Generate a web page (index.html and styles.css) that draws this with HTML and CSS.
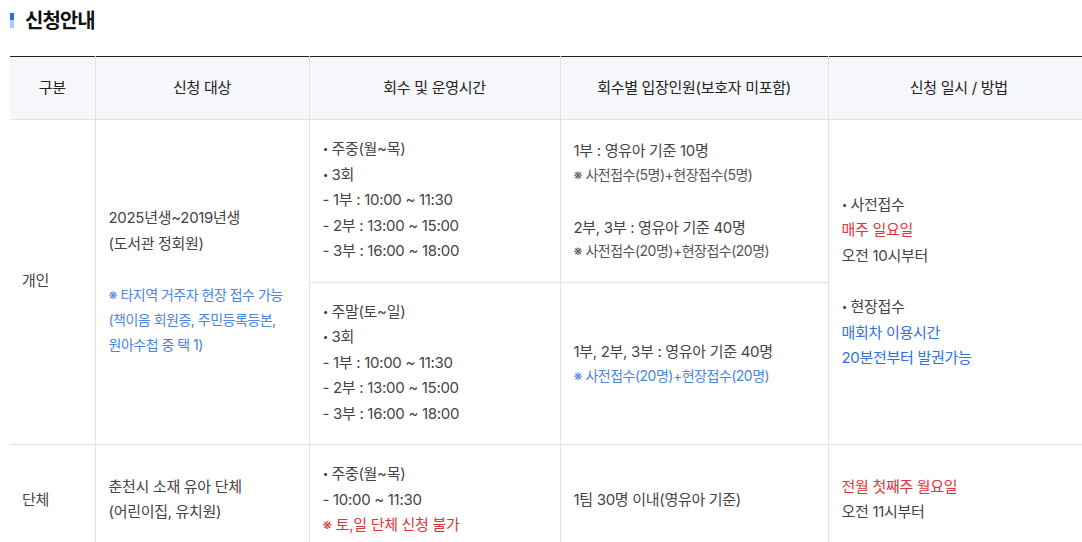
FILE: index.html
```html
<!DOCTYPE html>
<html lang="ko">
<head>
<meta charset="utf-8">
<title>신청안내</title>
<link rel="stylesheet" href="styles.css">
</head>
<body>
<div class="page">
  <h2 class="title"><span class="marker"></span>신청안내</h2>
  <table class="info">
    <colgroup>
      <col class="c1"><col class="c2"><col class="c3"><col class="c4"><col class="c5">
    </colgroup>
    <thead>
      <tr>
        <th>구분</th>
        <th>신청 대상</th>
        <th>회수 및 운영시간</th>
        <th>회수별 입장인원(보호자 미포함)</th>
        <th>신청 일시 / 방법</th>
      </tr>
    </thead>
    <tbody>
      <tr>
        <td class="first" rowspan="2">개인</td>
        <td rowspan="2">
          <p>2025년생~2019년생<br>(도서관 정회원)</p>
          <p class="note blue gap">※ 타지역 거주자 현장 접수 가능<br>(책이음 회원증, 주민등록등본,<br>원아수첩 중 택 1)</p>
        </td>
        <td>
          <p><span class="dot">•</span> 주중(월~목)<br><span class="dot">•</span> 3회<br>- 1부 : 10:00 ~ 11:30<br>- 2부 : 13:00 ~ 15:00<br>- 3부 : 16:00 ~ 18:00</p>
        </td>
        <td>
          <p>1부 : 영유아 기준 10명</p>
          <p class="small">※ 사전접수(5명)+현장접수(5명)</p>
          <p class="group">2부, 3부 : 영유아 기준 40명</p>
          <p class="small">※ 사전접수(20명)+현장접수(20명)</p>
        </td>
        <td rowspan="2">
          <p><span class="dot">•</span> 사전접수<br><span class="red">매주 일요일</span><br>오전 10시부터</p>
          <p class="gap"><span class="dot">•</span> 현장접수<br><span class="blue2">매회차 이용시간<br>20분전부터 발권가능</span></p>
        </td>
      </tr>
      <tr>
        <td>
          <p><span class="dot">•</span> 주말(토~일)<br><span class="dot">•</span> 3회<br>- 1부 : 10:00 ~ 11:30<br>- 2부 : 13:00 ~ 15:00<br>- 3부 : 16:00 ~ 18:00</p>
        </td>
        <td>
          <p>1부, 2부, 3부 : 영유아 기준 40명</p>
          <p class="small blue">※ 사전접수(20명)+현장접수(20명)</p>
        </td>
      </tr>
      <tr>
        <td class="first">단체</td>
        <td>
          <p>춘천시 소재 유아 단체<br>(어린이집, 유치원)</p>
        </td>
        <td>
          <p><span class="dot">•</span> 주중(월~목)<br>- 10:00 ~ 11:30<br><span class="red">※ 토,일 단체 신청 불가</span></p>
        </td>
        <td>
          <p>1팀 30명 이내(영유아 기준)</p>
        </td>
        <td>
          <p><span class="red">전월 첫째주 월요일</span><br>오전 11시부터</p>
        </td>
      </tr>
    </tbody>
  </table>
</div>
</body>
</html>
```
FILE: styles.css
```css
html, body {
  margin: 0;
  padding: 0;
  background: #fff;
  overflow: hidden;
}
body {
  font-family: Inter, "Noto Sans CJK KR", sans-serif;
  color: #444;
}
.page {
  padding: 6px 0 0 10px;
  width: 1090px;
}
.title {
  display: flex;
  align-items: center;
  margin: 0 0 24px 0;
  height: 26px;
  font-size: 20px;
  font-weight: 700;
  color: #111;
  letter-spacing: -1px;
}
.marker {
  width: 4px;
  height: 15px;
  margin: 2px 11px 0 0;
  background: linear-gradient(#2a6fdc 0, #2a6fdc 48%, #a9c9f6 48%, #a9c9f6 100%);
}
.info {
  width: 1080px;
  border-collapse: collapse;
  border-top: 1px solid #222;
  font-size: 15px;
  line-height: 25.5px;
  letter-spacing: -0.3px;
}
.c1 { width: 85px; }
.c2 { width: 214px; }
.c3 { width: 251px; }
.c4 { width: 268px; }
.info th {
  height: 62px;
  padding: 0;
  background: #f6f7fa;
  font-weight: 400;
  color: #222;
  text-align: center;
  border: 1px solid #e3e3e6;
  border-top: none;
}
.info th:first-child {
  border-left: none;
}
.info td {
  padding: 16px 13px 18px;
  vertical-align: middle;
  text-align: left;
  border: 1px solid #e3e3e6;
}
.info td.first {
  border-left: none;
  padding-left: 12px;
}
.info p {
  margin: 0;
}
.info p.gap {
  margin-top: 26px;
}
.note.gap {
  margin-top: 24px;
}
.info p.group {
  margin-top: 30px;
}
.dot {
  display: inline-block;
  font-size: 10px;
  width: 6px;
  vertical-align: top;
  line-height: 25.5px;
  text-align: center;
  margin-right: -1px;
}
.small {
  font-size: 14px;
  line-height: 21px;
  color: #555;
  letter-spacing: -0.5px;
}
.note {
  font-size: 14px;
  line-height: 25px;
  letter-spacing: -0.5px;
}
.blue {
  color: #4a85e2;
}
.blue2 {
  color: #2f72dc;
}
.red {
  color: #e3323d;
}
```
